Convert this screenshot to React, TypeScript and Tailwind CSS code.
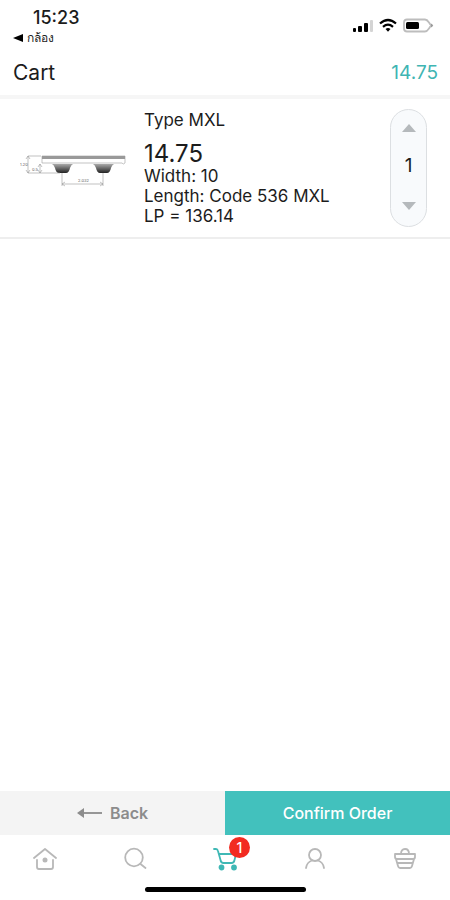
import { useState } from "react";

function StatusBar() {
  return (
    <div className="flex h-[51px] shrink-0 items-start justify-between pl-[13px] pr-4">
      <div>
        <div className="pl-5 pt-2 text-[18px] font-medium leading-5">15:23</div>
        <a href="#camera" className="flex h-5 items-center gap-1 text-[12px] font-medium leading-5">
          <svg width="10" height="8" viewBox="0 0 10 8" aria-hidden="true">
            <path d="M0 4 10 0v8z" fill="#000" />
          </svg>
          กล้อง
        </a>
      </div>
      <div className="flex items-center gap-1.5 pt-[18px]">
        <svg width="20" height="15" viewBox="0 0 20 15" aria-label="Signal">
          <rect x="0" y="10" width="3" height="4" rx="1" />
          <rect x="5" y="8" width="4" height="6" rx="1" />
          <rect x="11" y="5" width="4" height="9" rx="1" />
          <rect x="17" y="2" width="3" height="12" rx="1" fill="#d4d4d4" />
        </svg>
        <svg width="18" height="15" viewBox="0 0 18 15" fill="none" stroke="#000" strokeWidth="2.2" aria-label="Wi-Fi">
          <path d="M1 5.500Q9-1.500 17 5.500" />
          <path d="M4 8.800Q9 4.500 14 8.800" />
          <path d="m6.500 11 2.500 2.700L11.500 11Q9 9.200 6.500 11z" fill="#000" stroke="none" />
        </svg>
        <svg width="31" height="15" viewBox="0 0 31 15" aria-label="Battery">
          <path d="M4 1.500h18q2 0 4 3l2 3-2 3q-2 3-4 3H4q-3 0-3-3v-6q0-3 3-3z" fill="none" stroke="#bdbdbd" strokeWidth="1.800" />
          <rect x="3" y="4" width="13" height="7" rx="1.500" />
          <path d="M28 5.500q4 2 0 4z" fill="#9a9a9a" />
        </svg>
      </div>
    </div>
  );
}

function BeltDrawing() {
  return (
    <svg width="108" height="40" viewBox="0 0 108 40" role="img" aria-label="MXL belt profile">
      <defs>
        <linearGradient id="tooth" x1="0" y1="0" x2="0" y2="1">
          <stop offset="0" stopColor="#aaa" />
          <stop offset="1" stopColor="#222" />
        </linearGradient>
      </defs>
      <path d="M22 8h83v7q-2 2-3 0H22z" fill="#fff" stroke="#aaa" strokeWidth="0.700" />
      <rect x="22" y="8" width="83" height="3" fill="#999" />
      <path d="M32 16h21q-2 1-3 4-1 5-4 5h-7q-3 0-4-5-1-3-3-4zM73 16h21q-2 1-3 4-1 5-4 5h-7q-3 0-4-5-1-3-3-4z" fill="url(#tooth)" />
      <g stroke="#999" strokeWidth="0.600" fill="none">
        <path d="M8 8h13M8 25h32M8 8v17M20 16v9M42 25v13M83 25v13M42 36h41" />
        <path d="m6 11 2-3 2 3M6 22l2 3 2-3M18 19l2-3 2 3M18 22l2 3 2-3M45 34l-3 2 3 2M80 34l3 2-3 2" />
      </g>
      <g fill="#666" fontSize="4">
        <text x="0" y="18">1.20</text>
        <text x="12" y="23">0.5</text>
        <text x="58" y="34">2.032</text>
      </g>
    </svg>
  );
}

function QuantityStepper() {
  const [count, setCount] = useState(1);
  return (
    <div className="flex h-[118px] w-[37px] shrink-0 flex-col items-center justify-between rounded-full border border-[#dcdfe2] bg-[#f8fafc] text-[19px]">
      <button type="button" aria-label="Increase quantity" className="flex h-9 w-full items-center justify-center" onClick={() => setCount(count + 1)}>
        <svg width="14" height="8" viewBox="0 0 14 8"><path d="M7 0l7 8H0z" fill="#b5b9bc" /></svg>
      </button>
      <span>{count}</span>
      <button type="button" aria-label="Decrease quantity" className="flex h-10 w-full items-center justify-center" onClick={() => setCount(Math.max(0, count - 1))}>
        <svg width="14" height="8" viewBox="0 0 14 8"><path d="M7 8l7-8H0z" fill="#b5b9bc" /></svg>
      </button>
    </div>
  );
}

function TabBar() {
  const tab = "flex h-12 flex-1 items-center justify-center";
  const line = { width: 24, height: 24, viewBox: "0 0 24 24", fill: "none", strokeWidth: 1.8, strokeLinecap: "round", strokeLinejoin: "round" } as const;
  return (
    <nav className="flex shrink-0 pb-1 text-[#b8b8b8]">
      <a href="#home" aria-label="Home" className={tab}>
        <svg {...line} stroke="currentColor">
          <path d="M1 11 12 2l11 9M4 13v7q0 2 2 2h12q2 0 2-2v-7" />
          <circle cx="12" cy="13" r="2.500" fill="currentColor" stroke="none" />
        </svg>
      </a>
      <a href="#search" aria-label="Search" className={tab}>
        <svg {...line} stroke="currentColor">
          <circle cx="11" cy="10.500" r="8.800" />
          <path d="m17.500 17 5 4" />
        </svg>
      </a>
      <a href="#cart" aria-label="Cart" className={tab}>
        <span className="relative">
          <svg {...line} stroke="#3fb8b5">
            <path d="M1 2h2q1.500 0 2 2l2.500 9q.5 3 3 3h8q2.500 0 3-3L23 7H6" />
            <circle cx="8.500" cy="20.500" r="2" fill="#3fb8b5" />
            <circle cx="21" cy="20.500" r="2" fill="#3fb8b5" />
          </svg>
          <span className="absolute -top-2.5 left-4 flex size-[21px] items-center justify-center rounded-full bg-[#f22b21] text-[14px] font-medium text-white">1</span>
        </span>
      </a>
      <a href="#profile" aria-label="Profile" className={tab}>
        <svg {...line} stroke="currentColor">
          <circle cx="12" cy="8" r="6" />
          <path d="M3 21q1-6 6-7.500M21 21q-1-6-6-7.500" />
        </svg>
      </a>
      <a href="#shop" aria-label="Shop" className={tab}>
        <svg {...line} stroke="currentColor">
          <path d="M2 7h20v3q0 2-2 2H4q-2 0-2-2zM3 12l2 7q.5 2 2 2h10q1.500 0 2-2l2-7M5 16h14M8 7q0-5 4-5t4 5" />
        </svg>
      </a>
    </nav>
  );
}

export default function App() {
  return (
    <div className="flex min-h-screen flex-col bg-white font-['Inter','Noto_Sans',sans-serif] text-[#1c1c1c]">
      <StatusBar />
      <header className="flex h-12 shrink-0 items-center justify-between border-b-4 border-[#f6f6f6] pl-[13px] pr-3">
        <h1 className="text-[21px] leading-6">Cart</h1>
        <span className="text-[19px] leading-6 text-[#3fb5b3]">14.75</span>
      </header>
      <main className="flex-1">
        <article className="flex h-[140px] items-center border-b-2 border-[#eeeeee] pl-5 pr-[23px]">
          <BeltDrawing />
          <div className="ml-4 flex-1 text-[17px] leading-5">
            <h2>Type MXL</h2>
            <p className="mt-3 text-[24px] leading-6">14.75</p>
            <p>Width: 10</p>
            <p>Length: Code 536 MXL</p>
            <p>LP = 136.14</p>
          </div>
          <QuantityStepper />
        </article>
      </main>
      <div className="flex h-11 shrink-0 text-[16px]">
        <button type="button" className="flex flex-1 items-center justify-center gap-2 bg-[#f4f4f4] font-semibold text-[#8c8c8c]">
          <svg width="25" height="10" viewBox="0 0 25 10" fill="none" stroke="currentColor" strokeWidth="1.800">
            <path d="M3 5h22" />
            <path d="M7 0v10L0 5z" fill="currentColor" stroke="none" />
          </svg>
          Back
        </button>
        <button type="button" className="flex-1 bg-[#42c1bd] font-medium text-white">Confirm Order</button>
      </div>
      <TabBar />
      <div className="mx-auto mb-2 h-[5px] w-[161px] shrink-0 rounded-full bg-black" />
    </div>
  );
}
